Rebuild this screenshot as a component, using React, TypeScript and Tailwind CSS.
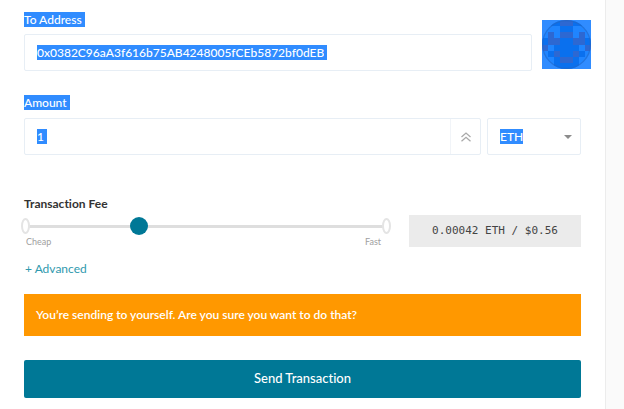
import { useState, type ReactNode } from "react";

const identicon = [
  "lbbppbbl",
  "lllbblll",
  "lplpplpl",
  "bppbbppb",
  "plbbbblp",
  "lbpbbpbl",
  "llbppbll",
  "llbbbbll",
];

const identiconColors: Record<string, string> = {
  l: "#1f85ff",
  b: "#0a70ee",
  p: "#2d68d2",
};

function Identicon() {
  return (
    <svg viewBox="0 0 48 48" className="h-[49px] w-[49px] shrink-0" role="img" aria-label="Address icon">
      <defs>
        <clipPath id="disc">
          <circle cx="24" cy="24" r="24" />
        </clipPath>
      </defs>
      <rect width="48" height="48" fill="#308cff" />
      <g clipPath="url(#disc)" shapeRendering="crispEdges">
        {identicon.map((row, y) =>
          row.split("").map((cell, x) => (
            <rect key={`${x}-${y}`} x={x * 6} y={y * 6} width="6" height="6" fill={identiconColors[cell]} />
          )),
        )}
      </g>
      <circle cx="24" cy="24" r="23.4" fill="none" stroke="#2467c4" strokeOpacity="0.6" strokeWidth="1.2" />
    </svg>
  );
}

function FieldLabel({ htmlFor, children }: { htmlFor: string; children: ReactNode }) {
  return (
    <label htmlFor={htmlFor} className="block h-[15px] w-fit bg-[#308cff] pr-[3px] leading-[15px] font-medium text-white">
      {children}
    </label>
  );
}

export default function App() {
  const [address, setAddress] = useState("0x0382C96aA3f616b75AB4248005fCEb5872bf0dEB");
  const [amount, setAmount] = useState("1");
  const [fee, setFee] = useState(31);

  return (
    <div className="flex min-h-screen bg-[#fafafa] font-[Lato,sans-serif] text-[12px] text-[#333] [font-variant-ligatures:none]">
      <form
        className="flex min-w-0 flex-1 flex-col border-r border-[#ececec] bg-white pt-3 pr-6 pb-3 pl-6"
        onSubmit={(e) => e.preventDefault()}
      >
        <div className="-mr-[10px] flex items-end gap-[10px]">
          <div className="min-w-0 flex-1">
            <FieldLabel htmlFor="address">To Address</FieldLabel>
            <div className="mt-[7px] flex h-[37px] items-center rounded-xs border border-[#e7eef5] px-3">
              <input
                id="address"
                value={address}
                onChange={(e) => setAddress(e.target.value)}
                className="h-[15px] bg-[#308cff] pr-[3px] leading-[15px] font-medium text-white outline-none [field-sizing:content]"
              />
            </div>
          </div>
          <div className="pb-[2px]">
            <Identicon />
          </div>
        </div>

        <div className="mt-6">
          <FieldLabel htmlFor="amount">Amount</FieldLabel>
          <div className="mt-2 flex gap-[6px]">
            <div className="flex h-[37px] min-w-0 flex-1 items-center rounded-xs border border-[#e7eef5] pl-3">
              <input
                id="amount"
                value={amount}
                onChange={(e) => setAmount(e.target.value)}
                className="h-[15px] bg-[#308cff] pr-[3px] leading-[15px] font-medium text-white outline-none [field-sizing:content]"
              />
              <button
                type="button"
                aria-label="Send entire balance"
                className="ml-auto flex h-full w-[30px] items-center justify-center border-l border-[#f1f4f8]"
              >
                <svg viewBox="0 0 10 10" className="h-[10px] w-[10px]" fill="none" stroke="#a9a9a9" strokeWidth="1.3">
                  <path d="M0.5 5 5 1l4.500 4M0.500 9.300 5 5.300l4.500 4" />
                </svg>
              </button>
            </div>
            <div className="flex h-[37px] w-[94px] items-center justify-between rounded-xs border border-[#e7eef5] pr-2 pl-3">
              <select
                aria-label="Currency"
                className="h-[15px] appearance-none bg-[#308cff] leading-[15px] font-medium text-white outline-none [field-sizing:content]"
              >
                <option>ETH</option>
              </select>
              <svg viewBox="0 0 8 4" className="h-1 w-2" fill="#8c8c8c">
                <path d="M0 0h8L4 4z" />
              </svg>
            </div>
          </div>
        </div>

        <div className="mt-[41px] flex items-start">
          <div className="min-w-0 flex-1">
            <label htmlFor="fee" className="block leading-4 font-bold">
              Transaction Fee
            </label>
            <div className="relative -ml-[3px] mt-[5px] flex h-[18px] items-center">
              <span className="absolute inset-x-1 h-[3px] bg-[#dedede]" />
              <span className="absolute left-0 h-4 w-[9px] rounded-[50%] border-2 border-[#e4e4e4] bg-white" />
              <span className="absolute right-0 h-4 w-[9px] rounded-[50%] border-2 border-[#e4e4e4] bg-white" />
              <input
                id="fee"
                type="range"
                min={0}
                max={100}
                value={fee}
                onChange={(e) => setFee(Number(e.target.value))}
                className="relative h-[18px] w-full appearance-none bg-transparent outline-none [&::-webkit-slider-thumb]:h-[18px] [&::-webkit-slider-thumb]:w-[18px] [&::-webkit-slider-thumb]:appearance-none [&::-webkit-slider-thumb]:rounded-full [&::-webkit-slider-thumb]:bg-[#007896]"
              />
            </div>
            <div className="flex justify-between pr-[10px] pl-[2px] text-[9px] leading-[14px] text-[#a0a0a0]">
              <span>Cheap</span>
              <span>Fast</span>
            </div>
          </div>
          <output
            htmlFor="fee"
            className="mt-[19px] ml-[18px] flex h-8 w-[172px] items-center justify-center bg-[#ebebeb] font-['DejaVu_Sans_Mono',monospace] text-[11px] text-[#444]"
          >
            0.00042 ETH / $0.56
          </output>
        </div>

        <button type="button" className="mt-3 self-start pl-px leading-4 text-[#3099ae]">
          + Advanced
        </button>

        <div role="alert" className="mt-[17px] flex h-[42px] items-center bg-[#ff9800] px-3 font-semibold text-white">
          You’re sending to yourself. Are you sure you want to do that?
        </div>

        <button type="submit" className="mt-6 h-[38px] rounded-xs bg-[#007896] text-[13px] font-medium text-white">
          Send Transaction
        </button>
      </form>
      <aside className="w-[18px] shrink-0" />
    </div>
  );
}
